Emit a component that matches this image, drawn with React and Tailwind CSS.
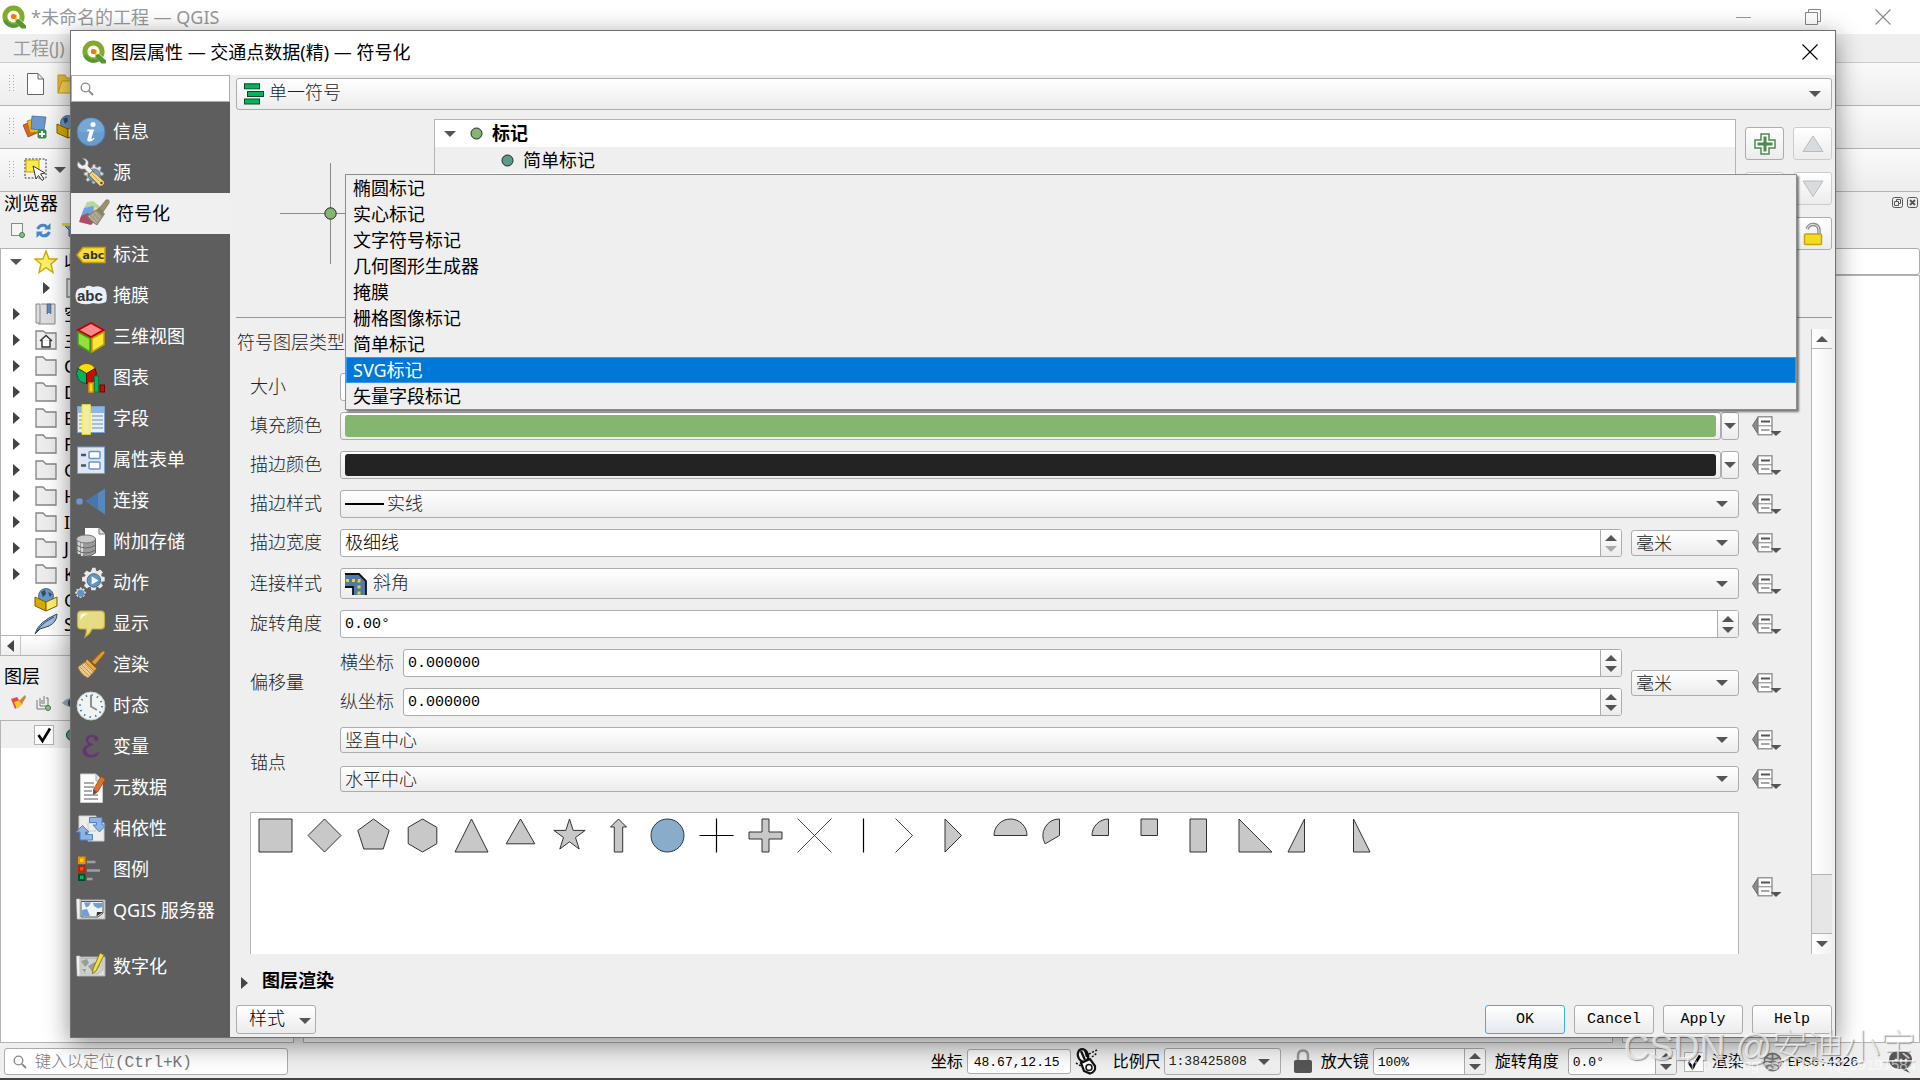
const sans = "font-['Noto_Sans','Noto_Sans_CJK_SC',sans-serif]";
const song = "font-['Liberation_Mono','Noto_Sans_CJK_SC',monospace]";
const face = "bg-linear-to-b from-white to-[#ececec] border border-[#acacac] rounded-[3px]";

/* ---------- small shared pieces ---------- */

const Down = ({ className = "", color = "#555" }) => (
  <svg className={className} width="12" height="6" viewBox="0 0 12 6">
    <path d="M0 0H12L6 6Z" fill={color} />
  </svg>
);

const Up = ({ className = "", color = "#555" }) => (
  <svg className={className} width="12" height="6" viewBox="0 0 12 6">
    <path d="M0 6H12L6 0Z" fill={color} />
  </svg>
);

const Right = ({ className = "" }) => (
  <svg className={className} width="7" height="12" viewBox="0 0 7 12">
    <path d="M0 0L7 6L0 12Z" fill="#444" />
  </svg>
);

const Search = () => (
  <svg width="14" height="14" viewBox="0 0 14 14" fill="none" stroke="#888" strokeWidth="1.3">
    <circle cx="5.5" cy="5.5" r="4.3" />
    <path d="M8.8 8.8L13 13" strokeWidth="1.8" />
  </svg>
);

const Cross = ({ color = "#000" }) => (
  <svg width="16" height="16" viewBox="0 0 16 16" stroke={color} strokeWidth="1.1">
    <path d="M.5 .5L15.5 15.5M15.5 .5L.5 15.5" />
  </svg>
);

const Logo = () => (
  <svg width="24" height="24" viewBox="0 0 24 24">
    <circle cx="11.5" cy="11.5" r="8.6" fill="none" stroke="#80ab2b" strokeWidth="5" />
    <path d="M3 15.500A9.500 9.500 0 0 0 16 20" fill="none" stroke="#589632" strokeWidth="3.500" />
    <path d="M13 13L15 11.500L24 20V23H19.500L12 16Z" fill="#fff" />
    <path d="M13.500 14H17L24 20.500V23.500H19.500L13.500 17.500Z" fill="#589632" />
    <path d="M9 8.500L15 10L15.500 15L12.500 14.500Z" fill="#f7d33b" />
    <circle cx="11.500" cy="11.500" r="2.600" fill="#ee7913" />
  </svg>
);

const Combo = ({ id, label, value, icon, className = "", pad = "pl-1" }) => (
  <div className={`relative ${className}`}>
    <select id={id} aria-label={label} className={`h-full w-full appearance-none pt-px text-[#222] ${pad} ${face}`}>
      <option>{value}</option>
    </select>
    {icon && <span className="pointer-events-none absolute inset-y-0 left-[5px] flex items-center">{icon}</span>}
    <Down className="pointer-events-none absolute top-1/2 right-[11px] -translate-y-1/2" />
  </div>
);

const Spin = ({ id, label, value, className = "", text = "text-[15px]", dimDown }) => (
  <div className={`flex overflow-hidden rounded-[3px] border border-[#acacac] bg-white ${className}`}>
    <input id={id} aria-label={label} defaultValue={value} className={`min-w-0 flex-1 pt-[2px] pl-1 text-black outline-none ${text}`} />
    <div className="flex w-[21px] flex-col items-center justify-center gap-[5px] border-l border-[#acacac] bg-linear-to-b from-white to-[#ececec]">
      <button aria-label="增加"><Up className="block" /></button>
      <button aria-label="减少"><Down className="block" color={dimDown ? "#aaa" : "#555"} /></button>
    </div>
  </div>
);

const Override = () => (
  <button aria-label="数据定义覆盖" className="ml-[13px] h-5 w-[30px] shrink-0">
    <svg width="30" height="20" viewBox="0 0 30 20">
      <path d="M6 1V18L.5 9.500Z" fill="#8a8a8a" stroke="#666" />
      <rect x="6" y=".8" width="14" height="18" fill="#fff" stroke="#808080" strokeWidth="1.2" />
      <path d="M6 9.800H20" stroke="#808080" />
      <path d="M9 5.500H18" stroke="#555" strokeWidth="2" />
      <path d="M9 14H17.500" stroke="#888" strokeWidth="1.500" />
      <path d="M18.500 15H29.500L24 20Z" fill="#555" />
    </svg>
  </button>
);

/* ---------- sidebar icons, all on a 30 x 30 grid ---------- */

const MapSheet = ({ children, gray }) => (
  <>
    <path d="M3 6H29V25H3Z" fill="#dfe1e1" stroke="#aaa" />
    <path d="M5 7.500H27V19L22 23H5Z" fill={gray ? "#cfd2d1" : "#eef3f6"} stroke={gray ? "#bbb" : "#4d5b66"} />
    {children}
    <path d="M.5 5H3.800V25H1.200Z" fill="#f6f6f6" stroke="#bbb" strokeWidth=".7" />
  </>
);

const gear = "M15 3l2 0 .6 3 2.600 1 2.500-1.800 2 2-1.700 2.600 1 2.500 3 .7v3l-3 .6-1 2.600 1.700 2.500-2 2-2.500-1.700-2.600 1-.6 3h-3l-.7-3-2.500-1-2.600 1.700-2-2 1.800-2.500-1.100-2.600-3-.6v-3l3-.7 1.100-2.500L6.200 8.200l2-2 2.600 1.800 2.500-1z";

const icons = {
  info: (
    <>
      <circle cx="15" cy="15" r="14" fill="#6a9bd1" stroke="#4f83bd" />
      <path d="M2 14A13 13 0 0 1 28 14Q15 17 2 14Z" fill="#85aedb" opacity=".6" />
      <circle cx="17" cy="7.500" r="2.500" fill="#fff" />
      <path d="M11.500 12.500H18L15.200 22Q16.500 22 18 20.500L18.500 21.500Q16 25 12.500 24.500Q10.800 24 11.500 21.500L13.500 14.200H11Z" fill="#fff" />
    </>
  ),
  source: (
    <>
      <g transform="translate(5 4) scale(.82)">
        <path d={gear} fill="#e4e4e4" stroke="#999" />
        <circle cx="16" cy="16" r="7.500" fill="#6f9fd2" stroke="#477" />
      </g>
      <path d="M2 3.500L6 7.500L9 6.500L9.500 3L6 0Q11 0 12.500 4L12 8L18 14L14.500 17L8.500 11Q3 12.500 1 7Z" fill="#f1f1f1" stroke="#777" strokeWidth=".8" />
      <path d="M12.500 17L16.500 13L28.500 23.500Q29 28 24 28.500Z" fill="#efd284" stroke="#60512c" />
      <path d="M16 16L26 26M18.500 14.500L28 24" stroke="#bf9f4a" strokeWidth=".7" />
      <circle cx="25.500" cy="25" r="1.200" fill="#444" />
    </>
  ),
  symbology: (
    <>
      <path d="M8 3L14 2L23 9L16 15L5 9Z" fill="#b9d79a" />
      <path d="M5 9L14 7L19 14L10 20L2 17Z" fill="#6aa5de" />
      <path d="M2 17L9 14L17 21L12 26L0 23Z" fill="#b04a68" />
      <path d="M15 8L22 11L14 17Z" fill="#e6dcae" />
      <path d="M8 17L17 11L24 17L18 26Q12 23 8 17Z" fill="#a19d86" stroke="#76725d" strokeWidth=".8" />
      <path d="M10 17L17 24M13 15L19 22M16 13L21 19" stroke="#c8c4b0" strokeWidth=".8" />
      <path d="M17 11L20 8.500L26 15L24 17.500Z" fill="#8c8565" />
      <path d="M20 9.500L27 1Q31 0 30 4L24 13Z" fill="#9a9173" stroke="#777055" strokeWidth=".7" />
    </>
  ),
  label: (
    <>
      <path d="M1 15L7 7.500H29V22.500H7Z" fill="#f7dd35" stroke="#c9a10c" strokeWidth="1.500" />
      <text x="6.500" y="18.500" fontSize="11" fontWeight="700" fontFamily="DejaVu Sans" fill="#333">abc</text>
    </>
  ),
  mask: (
    <>
      <path d="M1 9Q4 6 9 7Q11 3 17 6Q24 4 29 8Q32 14 30 21Q24 24 17 22Q8 25 1 21Q-2 15 1 9Z" fill="#e9effb" />
      <text x="1" y="19.500" fontSize="15" fontWeight="700" fontFamily="Liberation Sans" fill="#333">abc</text>
    </>
  ),
  cube: (
    <>
      <path d="M15 1L27.500 8L15 15L2 8Z" fill="#f78b8b" stroke="#c00000" strokeWidth="1.800" />
      <path d="M2 10L14 16.500V30L2 22.500Z" fill="#8fe23a" stroke="#4f9a12" strokeWidth="1.500" />
      <path d="M28 10L16 16.500V30L28 22.500Z" fill="#ffe53a" stroke="#c4a000" strokeWidth="1.500" />
    </>
  ),
  diagram: (
    <>
      <path d="M10.500 10.500L2 5.500A9.800 9.800 0 0 1 19 5.500Z" fill="#ffdc00" stroke="#5a4a00" strokeWidth=".7" />
      <path d="M10.500 10.500V20.300A9.800 9.800 0 0 1 2 5.500Z" fill="#06b35b" stroke="#034" strokeWidth=".7" />
      <path d="M10.500 10.500L19 5.500A9.800 9.800 0 0 1 10.500 20.300Z" fill="#c80d05" stroke="#400" strokeWidth=".7" />
      <rect x="13" y="20" width="4" height="9" fill="#ffdc00" stroke="#f28c00" strokeWidth="1.500" />
      <rect x="18.500" y="13" width="4" height="16" fill="#06b35b" stroke="#067a3c" />
      <rect x="24" y="22" width="4.500" height="7" fill="#c80d05" stroke="#700" />
    </>
  ),
  fields: (
    <>
      <rect x="1.500" y="2.500" width="27" height="26" fill="#e7edf3" stroke="#7ba0cf" />
      <rect x="2" y="3" width="26" height="6" fill="#8db7de" />
      <path d="M16 12H27M16 16H27M16 20H27M16 24H27M3 12H7M3 16H7M3 20H7M3 24H7" stroke="#6b8fb9" />
      <rect x="6.500" y="1" width="7.500" height="29" fill="#f3eab0" stroke="#fbf13a" strokeWidth="1.600" />
    </>
  ),
  form: (
    <>
      <rect x="1.500" y="2" width="27" height="26.500" fill="#dfe8f1" stroke="#7ba0cf" />
      <rect x="13" y="6.500" width="11" height="7" rx="1" fill="#fff" stroke="#6a95cc" strokeWidth="1.500" />
      <rect x="13" y="17" width="11" height="7" rx="1" fill="#fff" stroke="#6a95cc" strokeWidth="1.500" />
      <path d="M5 10H10M5 20.500H10" stroke="#45576b" strokeWidth="2.500" />
    </>
  ),
  join: (
    <>
      <circle cx="3.500" cy="15.500" r="3.300" fill="#6a98cd" />
      <path d="M9.500 15L29 2.500V28.500Z" fill="#5687bd" />
      <path d="M9.500 15L22 7V23Z" fill="#3c6a9f" opacity=".6" />
    </>
  ),
  storage: (
    <>
      <path d="M9 1H23L29 7V29H9Z" fill="#fff" />
      <path d="M23 1V7H29" fill="#ddd" stroke="#777" />
      <path d="M.5 12V26Q10 33 19.500 26V12Z" fill="#9b9b9b" stroke="#666" />
      <path d="M3 14V27M6 15V29" stroke="#d8d8d8" strokeWidth="2" />
      <path d="M.5 18Q10 24 19.500 18M.5 23Q10 29 19.500 23" fill="none" stroke="#666" />
      <ellipse cx="10" cy="12" rx="9.500" ry="4" fill="#c9c9c9" stroke="#777" />
    </>
  ),
  action: (
    <>
      <g transform="translate(3.500 -2) scale(.9)">
        <path d={gear} fill="#e9e9e9" stroke="#e9e9e9" strokeWidth="2" />
        <circle cx="16" cy="16" r="7.500" fill="#5f93cb" stroke="#467" />
        <path d="M13.500 11.500L21 16L13.500 20.500Z" fill="#fff" />
      </g>
      <g transform="translate(-2 18.500) scale(.42)">
        <path d={gear} fill="#e9e9e9" stroke="#ddd" strokeWidth="2" />
        <circle cx="16" cy="16" r="8.500" fill="#5f93cb" />
      </g>
    </>
  ),
  display: (
    <>
      <path d="M5 2H25Q28.500 2 28.500 6V16Q28.500 20 25 20H16Q14 25 9 28Q11 23 10 20H5Q1.500 20 1.500 16V6Q1.500 2 5 2Z" fill="#e6dc84" stroke="#c1ae3c" strokeWidth="1.200" />
      <path d="M4.500 11V7Q4.500 4.500 8 4.500H14Q7 5.500 4.500 11Z" fill="#fffbe0" />
    </>
  ),
  render: (
    <>
      <path d="M15.500 12L26 1.500Q29 0 29 3L19 15Z" fill="#e29a32" stroke="#9a5f10" />
      <path d="M11 9L21 19L18 21L9 12Z" fill="#f0ad45" stroke="#9a5f10" />
      <path d="M9 12L18.500 21L12 28Q4 24 2 17Z" fill="#ecc98c" stroke="#aa7a2a" />
      <path d="M4 17L13 26M6 15L15 24M8.500 13.500L17 22" stroke="#b98d48" strokeWidth=".8" />
    </>
  ),
  clock: (
    <>
      <circle cx="15" cy="15" r="14" fill="#f1f4f3" stroke="#c7cdcd" />
      <circle cx="15" cy="15" r="11" fill="none" stroke="#4b83b5" strokeWidth="2" strokeDasharray="1.500 4.260" />
      <path d="M15 4V15.500L21 19" fill="none" stroke="#8a8f8f" strokeWidth="2" />
    </>
  ),
  variable: (
    <path d="M20 10Q24 8 21.500 4.500Q17 1 11 4Q7 8 12 12.500Q4.500 15 6.500 21Q10 27 18 25.500Q24 23 23 19Q20 22 17 22.500Q11 23 10.500 18.500Q11 14 17 14V11.500Q12 11 12.500 7.500Q14 4 17.500 5.500Q18 8 20 10Z" fill="#5d3a68" stroke="#754c82" strokeWidth=".6" />
  ),
  metadata: (
    <>
      <path d="M4.500 1H20L26.500 8V29.500H4.500Z" fill="#fdfdfd" stroke="#ccc" />
      <path d="M20 1V8H26.500" fill="#e3e3e3" stroke="#aaa" />
      <path d="M8 10H18M8 14H18M8 18H16M8 22H22M8 26H22" stroke="#909090" strokeWidth="1.300" />
      <path d="M25 3.500L29.500 6L21.500 19L17.500 21.500L17.500 16.500Z" fill="#e0702a" stroke="#9b4412" strokeWidth=".8" />
      <path d="M17.500 16.500L21.500 19L17.500 21.500Z" fill="#555" />
    </>
  ),
  depend: (
    <>
      <path d="M3 2H20V17H3ZM12 9H28V27H12Z" fill="#eceeed" stroke="#ccc" />
      <path d="M13.500 3.500H26V11H30L23.500 18L17 11H20.500V8.500H13.500Z" fill="#8db4e8" stroke="#4f81c4" />
      <path d="M6.500 11.500L13 18H9.500V20.500H16.500V26H4V18H0Z" fill="#8db4e8" stroke="#4f81c4" />
    </>
  ),
  legend: (
    <>
      <rect x="3" y="2.500" width="5.500" height="5.500" fill="#ffd400" stroke="#f28c00" strokeWidth="2" />
      <rect x="3" y="11" width="5.500" height="5.500" fill="#ff4b00" stroke="#b62400" strokeWidth="2" />
      <rect x="3" y="19.500" width="5.500" height="5.500" fill="#06b35b" stroke="#064a2c" strokeWidth="2" />
      <path d="M11 7H19.500M11 15.500H24M11 24H16.500" stroke="#a0a0a0" strokeWidth="2.500" />
    </>
  ),
  server: (
    <g transform="translate(0 -2)">
      <MapSheet>
        <path d="M8 8.500H15L13 12L10 13.500ZM17 9H26V13L22 14.500L18 12ZM6 16L11 15L14 22H6Z" fill="#6fa0d4" />
        <path d="M20.500 22.500L21 18H27Z" fill="#333" />
      </MapSheet>
    </g>
  ),
  digitize: (
    <g transform="translate(0 -1)">
      <MapSheet gray>
        <path d="M5 10L11 8L13 12L9 16ZM12 15L19 11L24 15L17 22ZM6 18L10 18L9 22Z" fill="#94a09b" />
        <path d="M24 2L28 4L20 20L16.500 22.500L17 18Z" fill="#f2e047" stroke="#8b7d13" />
      </MapSheet>
    </g>
  ),
};

const Glyph = ({ name }) => (
  <svg width="30" height="30" viewBox="0 0 30 30" className="shrink-0 overflow-visible">
    {icons[name]}
  </svg>
);

const pages = [
  ["info", "信息"],
  ["source", "源"],
  ["symbology", "符号化"],
  ["label", "标注"],
  ["mask", "掩膜"],
  ["cube", "三维视图"],
  ["diagram", "图表"],
  ["fields", "字段"],
  ["form", "属性表单"],
  ["join", "连接"],
  ["storage", "附加存储"],
  ["action", "动作"],
  ["display", "显示"],
  ["render", "渲染"],
  ["clock", "时态"],
  ["variable", "变量"],
  ["metadata", "元数据"],
  ["depend", "相依性"],
  ["legend", "图例"],
  ["server", "QGIS 服务器"],
  ["digitize", "数字化"],
];

/* ---------- main window behind the dialog ---------- */

const Grip = () => (
  <svg width="5" height="18" viewBox="0 0 5 18" className="ml-[9px] shrink-0">
    <path d="M.5 0V18M4.500 0V18" stroke="#aaa" strokeDasharray="1 2" />
  </svg>
);

const Toolbar = ({ children }) => (
  <div className="flex h-[43px] items-center border-b border-[#b4b4b4] bg-linear-to-b from-[#fafafa] to-[#ededed]">
    <Grip />
    {children}
  </div>
);

const Folder = () => (
  <svg width="22" height="20" viewBox="0 0 22 20">
    <path d="M1 1H8L11 4H21V19H1Z" fill="#ededed" stroke="#858585" strokeWidth="1.300" />
  </svg>
);

const Star = () => (
  <svg width="24" height="24" viewBox="0 0 24 24">
    <path d="M12 1L15 9H23L17 14L19 22.500L12 17.500L5 22.500L7 14L1 9H9Z" fill="#fff06b" stroke="#d2a900" strokeWidth="1.400" />
  </svg>
);

const Bookmark = () => (
  <svg width="22" height="22" viewBox="0 0 22 22">
    <path d="M1 1H5V20H1ZM6 1H20V21H3" fill="#ddd" stroke="#888" />
    <path d="M12 1H16V11L14 9L12 11Z" fill="#5b8cc5" stroke="#345" strokeWidth=".5" />
  </svg>
);

const Home = () => (
  <svg width="22" height="20" viewBox="0 0 22 20">
    <path d="M1 1H8L11 3H21V19H1Z" fill="#eee" stroke="#858585" strokeWidth="1.300" />
    <path d="M5 11L11 5.500L17 11M7 10V17H15V10" fill="#fff" stroke="#333" strokeWidth="1.400" />
  </svg>
);

const GeoBox = () => (
  <svg width="24" height="24" viewBox="0 0 24 24">
    <circle cx="12" cy="8" r="7.500" fill="#6c97c8" stroke="#345" strokeWidth=".7" />
    <path d="M7 4L11 2L12 6L9 9ZM14 4L18 6L16 9Z" fill="#2f4c6b" />
    <path d="M1 9L12 14V23L1 18Z" fill="#d8ab00" stroke="#7a6000" />
    <path d="M23 9L12 14V23L23 18Z" fill="#ffee70" stroke="#7a6000" />
  </svg>
);

const Feather = () => (
  <svg width="24" height="22" viewBox="0 0 24 22">
    <path d="M1 21Q4 9 23 1Q23 9 15 13L6 16Z" fill="#9ebedd" stroke="#2d4a66" />
    <path d="M3 18Q9 9 20 4" fill="none" stroke="#2d4a66" />
  </svg>
);

const tree = [
  [<Bookmark key="i" />, "空间书签"],
  [<Home key="i" />, "主目录"],
  [<Folder key="i" />, "C:\\"],
  [<Folder key="i" />, "D:\\"],
  [<Folder key="i" />, "E:\\"],
  [<Folder key="i" />, "F:\\"],
  [<Folder key="i" />, "G:\\"],
  [<Folder key="i" />, "H:\\"],
  [<Folder key="i" />, "I:\\"],
  [<Folder key="i" />, "J:\\"],
  [<Folder key="i" />, "K:\\"],
];

const CheckBox = ({ label }) => (
  <span className="relative block size-5">
    <input type="checkbox" defaultChecked aria-label={label} className="block size-5 appearance-none border border-[#b4b4b4] bg-white" />
    <svg className="pointer-events-none absolute inset-0" width="20" height="20" viewBox="0 0 20 20">
      <path d="M4.500 10L8.500 16L16 3.500" fill="none" stroke="#000" strokeWidth="2.600" />
    </svg>
  </span>
);

const LeftDock = () => (
  <aside className="flex w-[294px] shrink-0 flex-col">
    <h2 className="h-6 pl-1 text-[18px] leading-[22px] text-black">浏览器</h2>
    <div className="mb-1 flex h-7 items-center gap-[11px] pl-[11px]">
      <svg width="14" height="15" viewBox="0 0 14 15">
        <rect x=".5" y=".5" width="11" height="12" fill="#f4f4f4" stroke="#888" />
        <circle cx="11" cy="12" r="2.500" fill="#8cc08f" stroke="#3c7a42" />
      </svg>
      <svg width="15" height="15" viewBox="0 0 15 15" fill="none" stroke="#4a86c8" strokeWidth="3">
        <path d="M1.500 6Q4 1 9 2.500L12 5M13.500 9Q11 14 6 12.500L3 10" />
        <path d="M14.500 0V6.500H8ZM.5 15V8.500H7Z" fill="#4a86c8" stroke="none" />
      </svg>
      <svg width="17" height="15" viewBox="0 0 17 15">
        <path d="M1 1H16L10 7V15L7 13V7Z" fill="#6fa0d4" stroke="#467" />
        <path d="M0 0H17V3H0Z" fill="#e8cf3c" />
      </svg>
    </div>
    <ul className="overflow-hidden border border-[#b4b4b4] bg-white text-[18px] text-black">
      <li className="flex h-[26px] items-center whitespace-nowrap">
        <Down className="ml-[9px] mr-3" />
        <Star />
        <span className="ml-[6px]">收藏夹</span>
      </li>
      <li className="flex h-[26px] items-center pl-[42px]">
        <Right className="mr-4" />
        <Folder />
      </li>
      {tree.map(([icon, name]) => (
        <li key={name} className="flex h-[26px] items-center whitespace-nowrap">
          <Right className="mr-[15px] ml-3" />
          {icon}
          <span className="ml-[7px]">{name}</span>
        </li>
      ))}
      <li className="flex h-[26px] items-center pl-[33px]"><GeoBox /><span className="ml-[6px]">GeoPackage</span></li>
      <li className="flex h-[22px] items-center overflow-hidden pl-[33px]"><Feather /><span className="ml-[6px]">SpatiaLite</span></li>
      <li className="flex h-5 items-center border-t border-[#b4b4b4] bg-linear-to-b from-white to-[#eee]">
        <button aria-label="向左滚动" className="flex h-full w-5 items-center justify-center border-r border-[#c4c4c4]">
          <Right className="rotate-180" />
        </button>
      </li>
    </ul>
    <h2 className="mt-2 h-[26px] pl-1 text-[18px] leading-6 text-black">图层</h2>
    <div className="mb-[5px] flex h-[25px] items-center gap-[10px] pl-[11px]">
      <svg width="15" height="15" viewBox="0 0 15 15">
        <path d="M0 4L6 2L10 8L4 14Z" fill="#e94b3c" />
        <path d="M3 7L9 5L12 9L6 14Z" fill="#f5c531" />
        <path d="M8 6L14 0L15 2L11 9Z" fill="#c88a35" />
      </svg>
      <svg width="16" height="16" viewBox="0 0 16 16" fill="none" stroke="#777">
        <path d="M1 5V14H9M4 3V11H12V3H10M6 5V9M8 1V9" />
        <circle cx="12" cy="13" r="2.500" fill="#8cc08f" stroke="#3c7a42" />
      </svg>
      <svg width="20" height="12" viewBox="0 0 20 12">
        <path d="M0 6Q9 -4 20 6Q9 14 0 6Z" fill="#9aa7b3" />
        <circle cx="10" cy="6" r="4" fill="#2d4a66" />
      </svg>
    </div>
    <div className="flex-1 border border-[#b4b4b4] bg-white">
      <label className="flex h-[27px] items-center bg-[#efefef] pl-[33px]">
        <CheckBox label="交通点数据(精)" />
        <svg className="ml-3" width="12" height="12" viewBox="0 0 12 12">
          <circle cx="6" cy="6" r="5.500" fill="#4f9e86" stroke="#23463c" />
        </svg>
      </label>
    </div>
  </aside>
);

const StatusBar = () => (
  <footer className={`flex h-[35px] shrink-0 items-center border-b-2 border-[#444] bg-[#efefef] pr-[6px] pl-1 text-[16px] text-black ${song}`}>
    <label className="flex h-[27px] w-[284px] items-center gap-2 rounded-[3px] border border-[#acacac] bg-white pl-2">
      <Search />
      <input aria-label="定位" placeholder="键入以定位(Ctrl+K)" className="min-w-0 flex-1 pt-[2px] font-light outline-none placeholder:text-[#777]" />
    </label>
    <div className="flex flex-1 items-center justify-end whitespace-nowrap">
      <label htmlFor="coord" className="pt-[2px]">坐标</label>
      <input id="coord" defaultValue="48.67,12.15" className="ml-1 h-[25px] w-[104px] rounded-[3px] border border-[#acacac] bg-white pt-[2px] pl-[6px] text-[13px]" />
      <svg className="ml-1" width="24" height="28" viewBox="0 0 24 28">
        <ellipse cx="8" cy="7.500" rx="5" ry="6.500" transform="rotate(-20 8 7.500)" fill="#fff" stroke="#111" strokeWidth="2.200" />
        <path d="M6 3L10 12M10 2L12 9" stroke="#111" strokeWidth="2.200" />
        <path d="M6 15L15 11L20 18Q21 24 15 25.500L9 23Z" fill="#fff" stroke="#111" strokeWidth="2.200" />
        <circle cx="14" cy="19.500" r="3" fill="none" stroke="#111" strokeWidth="1.500" />
        <path d="M1 15L6 18M14 6L22 2M17 9L22 5" stroke="#111" strokeWidth="1.500" strokeDasharray="2 1.500" />
      </svg>
      <label htmlFor="scale" className="ml-[14px] pt-[2px]">比例尺</label>
      <Combo id="scale" value="1:38425808" className="ml-[3px] h-[27px] w-[117px] text-[13px]" />
      <svg className="ml-3" width="20" height="26" viewBox="0 0 20 26">
        <path d="M5 12V7Q5 1.500 10 1.500T15 7V12" fill="none" stroke="#999" strokeWidth="2.500" />
        <rect x="1" y="11" width="18" height="13" rx="2" fill="#555" />
      </svg>
      <label htmlFor="zoomer" className="ml-2 pt-[2px]">放大镜</label>
      <Spin id="zoomer" value="100%" text="text-[13px]" className="ml-1 h-[27px] w-[113px]" />
      <label htmlFor="rotate" className="ml-[9px] pt-[2px]">旋转角度</label>
      <Spin id="rotate" value="0.0°" text="text-[13px]" className="ml-[9px] h-[27px] w-[109px]" />
      <label className="ml-[7px] flex items-center gap-2">
        <CheckBox label="渲染" />
        <span className="pt-[2px]">渲染</span>
      </label>
      <a href="#crs" className="ml-[17px] flex items-center gap-1 text-[13px]">
        <svg width="23" height="22" viewBox="0 0 23 22" fill="none" stroke="#777" strokeWidth="1.800">
          <circle cx="11.500" cy="11" r="8.500" fill="#ccc" />
          <path d="M0 11H23M11.500 2V20M4 6Q11.500 10 19 6M4 16Q11.500 12 19 16" />
        </svg>
        <span className="pt-[2px]">EPSG:4326</span>
      </a>
      <button aria-label="消息" className="ml-[30px]">
        <svg width="26" height="24" viewBox="0 0 26 24">
          <path d="M12 1Q24 1 24 10Q24 17 18 18.500L22 23L13 19Q2 19 1 10Q1 1 12 1Z" fill="#555" />
          <circle cx="8" cy="10" r="1.500" fill="#ddd" /><circle cx="13" cy="10" r="1.500" fill="#ddd" /><circle cx="18" cy="10" r="1.500" fill="#ddd" />
        </svg>
      </button>
    </div>
  </footer>
);

/* ---------- dialog ---------- */

const Sidebar = () => (
  <nav className="flex w-[159px] shrink-0 flex-col bg-[#5e5e5e]">
    <label className="flex h-[27px] items-center gap-1 border border-[#acacac] bg-white pl-2">
      <Search />
      <input aria-label="搜索" className="min-w-0 flex-1 text-sm outline-none" />
    </label>
    <div className="mt-[9px] flex flex-col">
      {pages.map(([icon, name]) => (
        <button
          key={name}
          className={`flex h-[41px] items-center gap-[7px] text-left text-[18px] whitespace-nowrap ${
            name === "符号化" ? "bg-[#f0f0f0] pl-[8px] text-black" : "pl-[5px] text-white"
          } ${name === "数字化" ? "mt-[15px]" : ""}`}
        >
          <Glyph name={icon} />
          {name}
        </button>
      ))}
    </div>
  </nav>
);

const Dot = ({ fill }) => (
  <svg width="13" height="13" viewBox="0 0 13 13">
    <circle cx="6.500" cy="6.500" r="5.500" fill={fill} stroke="#232323" />
  </svg>
);

const ToolButton = ({ label, dim, children }) => (
  <button
    aria-label={label}
    className={`flex h-[33px] w-[39px] items-center justify-center rounded-[3px] border bg-linear-to-b from-white to-[#ececec] ${dim ? "border-[#ccc]" : "border-[#acacac]"}`}
  >
    {children}
  </button>
);

const SymbolTree = () => (
  <div className="mt-[9px] flex h-[199px] border-b border-[#999]">
    <svg className="w-[188px] shrink-0" height="190" viewBox="0 0 188 190">
      <path d="M44 94.500H144M94.500 44V145" stroke="#8a8a8a" />
      <circle cx="94.500" cy="94.500" r="5.700" fill="#85b66f" stroke="#232323" />
    </svg>
    <ul className="ml-[10px] flex-1 border border-b-0 border-[#b4b4b4] bg-white text-[18px] text-black">
      <li className="flex h-[27px] items-center pl-[9px] font-bold">
        <Down className="mr-[14px]" />
        <Dot fill="#85b66f" />
        <span className="ml-[9px]">标记</span>
      </li>
      <li className="flex h-[26px] items-center bg-[#efefef] pl-[66px]">
        <Dot fill="#5a9c8c" />
        <span className="ml-[9px]">简单标记</span>
      </li>
    </ul>
    <div className="ml-[9px] grid grid-cols-2 content-start gap-x-[9px] gap-y-3 pt-2">
      <ToolButton label="添加符号图层">
        <svg width="22" height="22" viewBox="0 0 22 22" fill="#fff" stroke="#4c8a4f">
          <path d="M7 1H15V7H21V15H15V21H7V15H1V7H7Z" strokeWidth="1.500" />
          <path d="M11 3.500V18.500M3.500 11H18.500" strokeWidth="3" />
        </svg>
      </ToolButton>
      <ToolButton label="上移" dim>
        <svg width="22" height="18" viewBox="0 0 22 18"><path d="M11 1L21 16.500H1Z" fill="#d9dcdf" stroke="#bbb" /></svg>
      </ToolButton>
      <ToolButton label="删除符号图层" dim />
      <ToolButton label="下移" dim>
        <svg width="22" height="18" viewBox="0 0 22 18"><path d="M11 16.500L21 1H1Z" fill="#d9dcdf" stroke="#bbb" /></svg>
      </ToolButton>
      <ToolButton label="复制" />
      <ToolButton label="锁定颜色">
        <svg width="20" height="24" viewBox="0 0 20 24">
          <path d="M4 7Q6 2 11 2.500T16 9V12" fill="none" stroke="#888" strokeWidth="3.500" />
          <path d="M4 7Q6 2 11 2.500T16 9V12" fill="none" stroke="#ddd" strokeWidth="1.200" />
          <rect x="1.500" y="12" width="17" height="10.500" rx="1" fill="#f2dc21" stroke="#c9a10c" strokeWidth="1.500" />
        </svg>
      </ToolButton>
    </div>
  </div>
);

const Row = ({ label, id, h = "h-7", children }) => (
  <div className="flex items-center">
    <label htmlFor={id} className="w-[90px] shrink-0 pt-[2px] leading-6">{label}</label>
    <div className={`flex flex-1 ${h}`}>{children}</div>
    <Override />
  </div>
);

const ColorButton = ({ id, className }) => (
  <>
    <button id={id} aria-label="颜色" className={`flex flex-1 px-1 py-[2px] ${face}`}>
      <span className={`block h-full w-full rounded-[3px] ${className}`} />
    </button>
    <button aria-label="颜色菜单" className={`flex w-[18px] items-center justify-center ${face}`}>
      <Down />
    </button>
  </>
);

const g = { fill: "#c8c8c8", stroke: "#333", strokeWidth: 1 };

const markers = [
  <path d="M-16.500 -16.500H16.500V16.500H-16.500Z" {...g} />,
  <path d="M0 -16.500L16.500 0L0 16.500L-16.500 0Z" {...g} />,
  <path d="M0 -16.500L15.700 -5L9.700 13.500H-9.700L-15.700 -5Z" {...g} />,
  <path d="M0 -16.500L14.300 -8.200V8.200L0 16.500L-14.300 8.200V-8.200Z" {...g} />,
  <path d="M0 -16.500L16.500 16.500H-16.500Z" {...g} />,
  <path d="M0 -16.500L14.300 8.300H-14.300Z" {...g} />,
  <path d="M0 -16.500L3.700 -5.100H15.700L6 2L9.700 13.500L0 6.300L-9.700 13.500L-6 2L-15.700 -5.100H-3.700Z" {...g} />,
  <path d="M0 -16.500L8 -8.500H4.200V16.500H-4.200V-8.500H-8Z" {...g} />,
  <circle r="16.500" fill="#8aaccb" stroke="#24384c" />,
  <path d="M0 -17V17M-17 0H17" stroke="#000" strokeWidth="1.200" />,
  <path d="M-3.500 -16.500H3.500V-3.500H16.500V3.500H3.500V16.500H-3.500V3.500H-16.500V-3.500H-3.500Z" {...g} />,
  <path d="M-17 -17L17 17M17 -17L-17 17" stroke="#333" strokeWidth=".9" />,
  <path d="M0 -17V17" stroke="#000" strokeWidth="1.200" />,
  <path d="M-17 -17L0 0L-17 17" fill="none" stroke="#444" />,
  <path d="M-16.500 -16.500L0 0L-16.500 16.500Z" {...g} />,
  <path d="M-16.500 0A16.500 16.500 0 0 1 16.500 0Z" {...g} />,
  <path d="M0 -16.500V0L-14.300 8.300A16.500 16.500 0 0 1 0 -16.500Z" {...g} />,
  <path d="M0 -16.500V0H-16.500A16.500 16.500 0 0 1 0 -16.500Z" {...g} />,
  <path d="M-16.500 -16.500H0V0H-16.500Z" {...g} />,
  <path d="M-16.500 -16.500H0V16.500H-16.500Z" {...g} />,
  <path d="M-16.500 -16.500L16.500 16.500H-16.500Z" {...g} />,
  <path d="M0 -16.500V16.500H-16.500Z" {...g} />,
  <path d="M0 -16.500V16.500H16.500Z" {...g} />,
];

const Properties = () => (
  <div className="mt-[11px] flex min-h-0 flex-1">
    <form className={`flex flex-1 flex-col gap-[11px] pr-[29px] pl-[14px] text-[18px] font-light text-[#222] ${song}`}>
      <div className="mb-[5px] -ml-[13px] flex h-7 items-center pt-[2px]">符号图层类型</div>
      <Row label="大小" id="size"><Spin id="size" value="2.000000" className="flex-1" /></Row>
      <Row label="填充颜色" id="fill"><ColorButton id="fill" className="bg-[#85b66f]" /></Row>
      <Row label="描边颜色" id="stroke"><ColorButton id="stroke" className="bg-[#232323]" /></Row>
      <Row label="描边样式" id="style">
        <Combo id="style" value="实线" pad="pl-[46px]" className="flex-1" icon={<span className="h-[2px] w-[39px] bg-black" />} />
      </Row>
      <Row label="描边宽度" id="width">
        <Spin id="width" value="极细线" text="text-[18px]" className="flex-1" dimDown />
        <Combo label="宽度单位" value="毫米" className="ml-[9px] h-[26px] w-[108px] self-center" />
      </Row>
      <Row label="连接样式" id="join" h="h-[31px]">
        <Combo
          id="join"
          value="斜角"
          pad="pl-8"
          className="flex-1"
          icon={
            <svg width="22" height="22" viewBox="0 0 22 22">
              <path d="M0 1H14L21 8V22H8V14H0Z" fill="#5078aa" />
              <path d="M0 1H14L21 8V22M0 14H8V22" fill="none" stroke="#111" strokeWidth="1.800" />
              <path d="M1 7.500H14V22" fill="none" stroke="#ead619" strokeWidth="3" strokeDasharray="3 3" />
            </svg>
          }
        />
      </Row>
      <Row label="旋转角度" id="angle"><Spin id="angle" value="0.00°" className="flex-1" /></Row>
      <Row label="偏移量" id="offx" h="">
        <div className="flex flex-1 flex-col gap-[11px]">
          <div className="flex h-7 items-center">
            <label htmlFor="offx" className="w-[63px] pt-[2px] leading-6">横坐标</label>
            <Spin id="offx" value="0.000000" className="h-full flex-1" />
          </div>
          <div className="flex h-7 items-center">
            <label htmlFor="offy" className="w-[63px] pt-[2px] leading-6">纵坐标</label>
            <Spin id="offy" value="0.000000" className="h-full flex-1" />
          </div>
        </div>
        <Combo label="偏移单位" value="毫米" className="ml-[9px] h-[26px] w-[108px] self-center" />
      </Row>
      <div className="flex items-center">
        <label htmlFor="anchor" className="w-[90px] pt-2 leading-6">锚点</label>
        <div className="flex flex-1 flex-col gap-[13px]">
          <div className="flex items-center">
            <Combo id="anchor" value="竖直中心" className="h-[26px] flex-1" />
            <Override />
          </div>
          <div className="flex items-center">
            <Combo label="水平锚点" value="水平中心" className="h-[26px] flex-1" />
            <Override />
          </div>
        </div>
      </div>
      <div className="mt-[9px] flex min-h-0 flex-1 items-stretch">
        <ul className="flex flex-1 items-start border border-b-0 border-[#b4b4b4] bg-white pt-[5px]">
          {markers.map((shape, i) => (
            <li key={i} className="flex w-[49px] justify-center">
              <svg width="35" height="35" viewBox="-17.500 -17.500 35 35">{shape}</svg>
            </li>
          ))}
        </ul>
        <span className="flex items-center pt-2"><Override /></span>
      </div>
    </form>
    <div className="flex w-[21px] flex-col border-l border-[#b4b4b4] bg-linear-to-r from-white to-[#f2f2f2]">
      <button aria-label="向上滚动" className="flex h-5 items-center justify-center border-b border-[#b4b4b4]"><Up /></button>
      <div className="flex-1" />
      <div className="h-[60px] border-y border-[#b4b4b4] bg-[#e6e6e6]" />
      <button aria-label="向下滚动" className="flex h-5 items-center justify-center"><Down /></button>
    </div>
  </div>
);

const layerTypes = ["椭圆标记", "实心标记", "文字符号标记", "几何图形生成器", "掩膜", "栅格图像标记", "简单标记", "SVG标记", "矢量字段标记"];

const TypeMenu = () => (
  <ul role="listbox" aria-label="符号图层类型" className="absolute top-[143px] right-[38px] left-[274px] border border-[#8c8c8c] bg-[#efefef] text-[18px] text-black shadow-[2px_2px_2px_rgba(0,0,0,0.5)]">
    {layerTypes.map((t) => (
      <li
        key={t}
        role="option"
        aria-selected={t === "SVG标记"}
        className={`h-[26px] border pl-[6px] leading-6 ${t === "SVG标记" ? "border-[#3399ff] bg-[#0078d7] text-white" : "border-transparent"}`}
      >
        {t}
      </li>
    ))}
  </ul>
);

const Dialog = () => (
  <section role="dialog" aria-label="图层属性" className="absolute top-[30px] right-[84px] bottom-[42px] left-[70px] flex flex-col border border-[#707070] bg-[#efefef] shadow-[0_6px_24px_rgba(0,0,0,0.45)]">
    <header className="flex h-11 shrink-0 items-center bg-white pr-[17px] pb-[2px] pl-[11px]">
      <Logo />
      <h1 className="ml-[5px] flex-1 text-[18px] text-black">图层属性 — 交通点数据(精) — 符号化</h1>
      <button aria-label="关闭"><Cross /></button>
    </header>
    <div className="flex min-h-0 flex-1">
      <Sidebar />
      <main className="flex min-w-0 flex-1 flex-col pt-[3px] pr-[3px] pb-[3px] pl-[6px]">
        <Combo
          label="渲染器"
          value="单一符号"
          pad="pl-8"
          className={`h-8 shrink-0 text-[18px] font-light ${song}`}
          icon={
            <svg className="ml-[3px]" width="20" height="22" viewBox="0 0 20 22" fill="#06b35b" stroke="#064a2c">
              <rect x=".5" y=".8" width="15" height="5" />
              <rect x="3.500" y="8.500" width="16" height="5" />
              <rect x=".5" y="16" width="15" height="5" />
            </svg>
          }
        />
        <SymbolTree />
        <Properties />
        <div className={`flex h-[51px] shrink-0 items-center pt-[6px] pl-[5px] text-[18px] font-bold text-black ${song}`}>
          <button className="flex items-center"><Right className="mr-[14px]" />图层渲染</button>
        </div>
        <div className={`flex h-[29px] shrink-0 gap-[9px] text-[15px] text-black ${song}`}>
          <button className={`mr-auto flex w-20 items-center justify-between pt-[2px] pr-1 pl-3 text-[18px] font-light ${face}`}>
            样式
            <Down />
          </button>
          <button className="w-20 rounded-[3px] border border-[#3daee9] bg-linear-to-b from-white to-[#e4e9ee] pt-[2px]">OK</button>
          <button className={`w-20 pt-[2px] ${face}`}>Cancel</button>
          <button className={`w-20 pt-[2px] ${face}`}>Apply</button>
          <button className={`w-20 pt-[2px] ${face}`}>Help</button>
        </div>
      </main>
    </div>
    <TypeMenu />
  </section>
);

export default function App() {
  return (
    <div className={`relative flex h-screen w-full flex-col overflow-hidden bg-[#efefef] ${sans}`}>
      <header className="flex h-[34px] shrink-0 items-center bg-white pr-[29px] pl-[2px]">
        <Logo />
        <span className="ml-[5px] flex-1 text-[18px] text-[#999]">*未命名的工程 — QGIS</span>
        <div className="flex items-center gap-[54px]">
          <button aria-label="最小化" className="h-px w-[15px] bg-[#999]" />
          <button aria-label="还原">
            <svg width="16" height="16" viewBox="0 0 16 16" fill="none" stroke="#888">
              <path d="M.5 3.500H12.500V15.500H.5ZM3.500 3.500V.5H15.500V12.500H12.500" />
            </svg>
          </button>
          <button aria-label="关闭"><Cross color="#888" /></button>
        </div>
      </header>
      <div className="flex h-[29px] shrink-0 items-center border-b border-[#ccc] pl-[13px] text-[18px] text-[#999]">工程(J)</div>
      <Toolbar>
        <svg className="ml-[13px]" width="17" height="22" viewBox="0 0 17 22">
          <path d="M.5 .5H11L16.500 6V21.500H.5ZM11 .5V6H16.500" fill="#fff" stroke="#666" />
        </svg>
        <svg className="ml-[13px]" width="24" height="20" viewBox="0 0 24 20">
          <path d="M1 19V1H8L10 4H20V8" fill="#e8bf3a" stroke="#c79c1c" />
          <path d="M1 19L5 7H24L20 19Z" fill="#f8d556" stroke="#c79c1c" />
        </svg>
      </Toolbar>
      <Toolbar>
        <svg className="ml-[9px]" width="25" height="24" viewBox="0 0 25 24">
          <path d="M0 10L10 6L14 18L5 22Z" fill="#d8642c" stroke="#8d3a12" strokeWidth=".7" />
          <path d="M4 6L14 3L17 17L7 18Z" fill="#f1b51c" stroke="#94700c" strokeWidth=".7" />
          <path d="M9 1L23 2L21 15L8 14Z" fill="#6a98cd" stroke="#3c6490" strokeWidth=".7" />
          <rect x="14.500" y="14.500" width="9" height="9" rx="2" fill="#3f8a4a" />
          <path d="M19 16V22M16 19H22" stroke="#fff" strokeWidth="1.800" />
        </svg>
        <span className="ml-2"><GeoBox /></span>
      </Toolbar>
      <Toolbar>
        <svg className="ml-[10px]" width="24" height="24" viewBox="0 0 24 24">
          <path d="M1 1H22V20H1Z" fill="none" stroke="#333" strokeDasharray="2 1.500" />
          <path d="M2 2H15V14H2Z" fill="#fde947" stroke="#c9a10c" />
          <path d="M9 8L21 15L16.500 16L20 21L18 22.500L14.500 17.500L12 21Z" fill="#fff" stroke="#333" />
        </svg>
        <Down className="ml-[6px]" />
      </Toolbar>
      <div className="flex min-h-0 flex-1">
        <LeftDock />
        <div className="mx-[9px] flex-1 border border-[#b4b4b4] bg-white" />
        <aside className="flex w-[298px] shrink-0 flex-col">
          <div className="flex h-[56px] items-start justify-end gap-1 pt-[5px] pr-[2px]">
            <button aria-label="浮动">
              <svg width="11" height="11" viewBox="0 0 11 11" fill="none" stroke="#555">
                <rect x=".5" y=".5" width="10" height="10" rx="2" /><path d="M2.500 4.500H6.500V8.500H2.500ZM4.500 4V2.500H8.500V6.500H7" />
              </svg>
            </button>
            <button aria-label="关闭面板">
              <svg width="11" height="11" viewBox="0 0 11 11" fill="none" stroke="#555">
                <rect x=".5" y=".5" width="10" height="10" rx="2" /><path d="M3 3L8 8M8 3L3 8" strokeWidth="1.800" />
              </svg>
            </button>
          </div>
          <input aria-label="过滤" className="h-[27px] rounded-[3px] border border-[#acacac] bg-white" />
          <div className="flex-1 border border-[#b4b4b4] bg-white" />
        </aside>
      </div>
      <div className="h-[2px] shrink-0" />
      <StatusBar />
      <Dialog />
      <div className="pointer-events-none absolute right-1 bottom-3 text-[36px] leading-10 font-light whitespace-nowrap text-white/70 [text-shadow:1px_1px_1px_rgba(90,90,90,0.6)] font-['Liberation_Sans','Noto_Sans_CJK_SC',sans-serif]">
        CSDN @安迪小宝
      </div>
      <div className="pointer-events-none absolute right-1 bottom-1 text-[15px] whitespace-nowrap text-white/60 font-['Liberation_Sans',sans-serif]">
        https://blog.csdn.net/qq_39191584
      </div>
    </div>
  );
}
